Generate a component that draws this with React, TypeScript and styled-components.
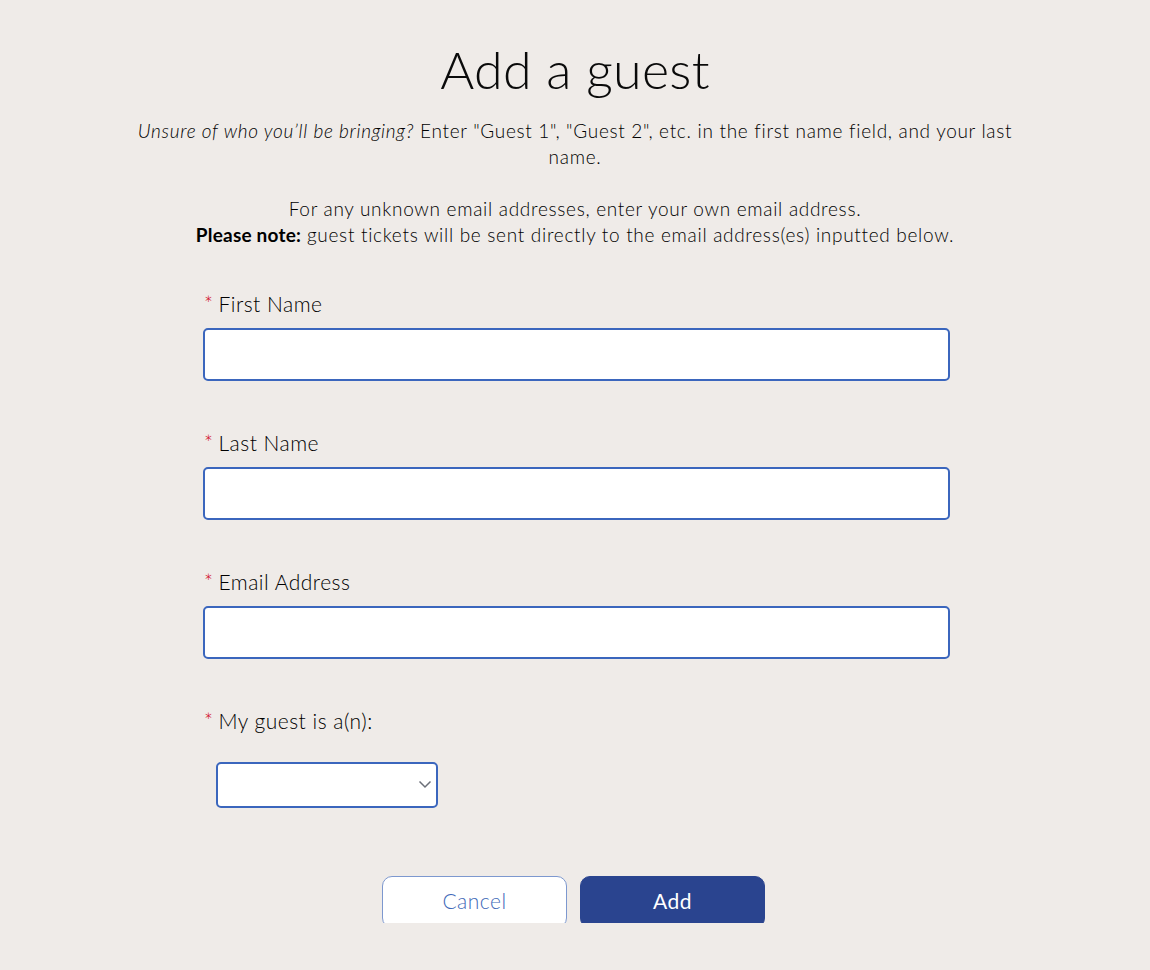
import React from "react";
import styled, { createGlobalStyle } from "styled-components";

const GlobalStyle = createGlobalStyle`
  html, body {
    margin: 0;
    padding: 0;
    background: #efebe8;
  }
  body {
    font-family: Lato, "Noto Sans", sans-serif;
    color: #111111;
  }
`;

const Page = styled.div`
  min-height: 970px;
  display: flex;
  flex-direction: column;
  align-items: center;
  padding-top: 37px;
  box-sizing: border-box;
`;

const Title = styled.h1`
  margin: 0;
  font-size: 52px;
  font-weight: 300;
  line-height: 64px;
  letter-spacing: 0.3px;
  color: #0a0a0a;
`;

const Intro = styled.div`
  width: 920px;
  margin-top: 17px;
  text-align: center;
  font-size: 19px;
  font-weight: 300;
  line-height: 26px;
  letter-spacing: 0.7px;
  color: #000000;
`;

const Para = styled.p<{ $gap?: number }>`
  margin: 0;
  margin-top: ${(p) => p.$gap ?? 0}px;
`;

const Note = styled.strong`
  font-weight: 700;
  letter-spacing: 0.2px;
`;

const Form = styled.form`
  width: 747px;
  margin-top: 43px;
  margin-left: 3px;
  display: flex;
  flex-direction: column;
`;

const Field = styled.div`
  display: flex;
  flex-direction: column;
  margin-bottom: 49px;
`;

const Label = styled.label`
  display: flex;
  align-items: baseline;
  gap: 5px;
  font-size: 21px;
  font-weight: 300;
  line-height: 26px;
  letter-spacing: 0.5px;
  margin-bottom: 11px;
  color: #000000;
`;

const Star = styled.span`
  color: #d0021b;
  font-size: 21px;
  margin-left: 1px;
`;

const TextInput = styled.input`
  height: 53px;
  width: 100%;
  box-sizing: border-box;
  border: 2px solid #3b66bd;
  border-radius: 5px;
  background: #ffffff;
  font-size: 18px;
  font-family: inherit;
  padding: 0 12px;
  outline: none;
`;

const SelectWrap = styled.div`
  position: relative;
  width: 222px;
  margin-left: 13px;
  margin-top: 17px;
`;

const Select = styled.select`
  width: 100%;
  height: 46px;
  box-sizing: border-box;
  border: 2px solid #3b66bd;
  border-radius: 5px;
  background: #ffffff;
  appearance: none;
  font-family: inherit;
  font-size: 18px;
  padding: 0 30px 0 10px;
  outline: none;
`;

const Chevron = styled.svg`
  position: absolute;
  right: 6px;
  top: 18px;
  pointer-events: none;
`;

const Actions = styled.div`
  display: flex;
  justify-content: center;
  gap: 13px;
  margin-top: 19px;
  padding-right: 6px;
  height: 47px;
  overflow: hidden;
  align-items: flex-start;
`;

const Button = styled.button<{ $primary?: boolean }>`
  width: 185px;
  height: 52px;
  box-sizing: border-box;
  border-radius: 10px;
  font-family: inherit;
  font-size: 21px;
  font-weight: ${(p) => (p.$primary ? 400 : 300)};
  letter-spacing: 0.5px;
  cursor: pointer;
  padding-bottom: 5px;
  background: ${(p) => (p.$primary ? "#2a448f" : "#ffffff")};
  color: ${(p) => (p.$primary ? "#ffffff" : "#4169b8")};
  border: 1px solid ${(p) => (p.$primary ? "#2a448f" : "#7d98cf")};
`;

const fields = ["First Name", "Last Name", "Email Address"];

const App: React.FC = () => {
  return (
    <>
      <GlobalStyle />
      <Page>
        <Title>Add a guest</Title>
        <Intro>
          <Para>
            <em>Unsure of who you’ll be bringing?</em> Enter "Guest 1", "Guest 2", etc. in the first name
            field, and your last name.
          </Para>
          <Para $gap={26}>For any unknown email addresses, enter your own email address.</Para>
          <Para>
            <Note>Please note:</Note> guest tickets will be sent directly to the email address(es) inputted
            below.
          </Para>
        </Intro>
        <Form onSubmit={(e) => e.preventDefault()}>
          {fields.map((f) => (
            <Field key={f}>
              <Label>
                <Star>*</Star>
                {f}
              </Label>
              <TextInput type="text" />
            </Field>
          ))}
          <Field>
            <Label>
              <Star>*</Star>
              My guest is a(n):
            </Label>
            <SelectWrap>
              <Select defaultValue="">
                <option value=""></option>
                <option value="adult">Adult</option>
                <option value="child">Child</option>
              </Select>
              <Chevron width="14" height="9" viewBox="0 0 14 9">
                <path d="M1.5 1.5 L7 7 L12.5 1.5" fill="none" stroke="#6b6f78" strokeWidth="1.5" />
              </Chevron>
            </SelectWrap>
          </Field>
          <Actions>
            <Button type="button">Cancel</Button>
            <Button type="submit" $primary>
              Add
            </Button>
          </Actions>
        </Form>
      </Page>
    </>
  );
};

export default App;
